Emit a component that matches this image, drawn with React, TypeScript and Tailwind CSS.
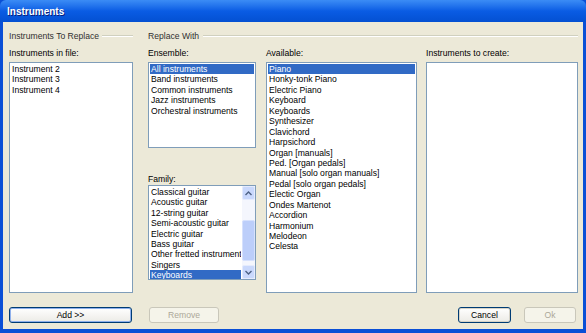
import React from "react";

const font = { fontFamily: '"Liberation Sans", Arial, sans-serif' };

const ensemble = [
  "All instruments",
  "Band instruments",
  "Common instruments",
  "Jazz instruments",
  "Orchestral instruments",
];

const family = [
  "Classical guitar",
  "Acoustic guitar",
  "12-string guitar",
  "Semi-acoustic guitar",
  "Electric guitar",
  "Bass guitar",
  "Other fretted instruments",
  "Singers",
  "Keyboards",
];

const available = [
  "Piano",
  "Honky-tonk Piano",
  "Electric Piano",
  "Keyboard",
  "Keyboards",
  "Synthesizer",
  "Clavichord",
  "Harpsichord",
  "Organ [manuals]",
  "Ped. [Organ pedals]",
  "Manual [solo organ manuals]",
  "Pedal [solo organ pedals]",
  "Electic Organ",
  "Ondes Martenot",
  "Accordion",
  "Harmonium",
  "Melodeon",
  "Celesta",
];

function ListItems({ items, selected }: { items: string[]; selected?: string }) {
  return (
    <div className="flex flex-col pt-[1px] px-[1px]">
      {items.map((it) => (
        <div
          key={it}
          className={
            "h-[10.45px] leading-[10.45px] pl-[1px] whitespace-nowrap overflow-hidden " +
            (it === selected ? "bg-[#316ac5] text-white" : "text-black")
          }
        >
          {it}
        </div>
      ))}
    </div>
  );
}

function ListBox({
  items,
  selected,
  className,
}: {
  items: string[];
  selected?: string;
  className: string;
}) {
  return (
    <div className={"bg-white border border-[#7f9db9] overflow-hidden " + className}>
      <ListItems items={items} selected={selected} />
    </div>
  );
}

function Chevron({ up }: { up?: boolean }) {
  return (
    <svg width="7" height="5" viewBox="0 0 7 5">
      <path
        d={up ? "M0.5 4 L3.5 1 L6.5 4" : "M0.5 1 L3.5 4 L6.5 1"}
        fill="none"
        stroke="#4d6185"
        strokeWidth="1.4"
      />
    </svg>
  );
}

function ScrollBar() {
  return (
    <div className="w-[13px] flex flex-col bg-[#f4f6fd]">
      <div className="h-[14px] flex items-center justify-center bg-[#c9d8fc] border border-[#e4ebfd] rounded-[2px]">
        <Chevron up />
      </div>
      <div className="h-[20px]" />
      <div className="h-[41px] bg-[#bccefa] border border-[#d6e1fd] rounded-[2px]" />
      <div className="flex-1" />
      <div className="h-[14px] flex items-center justify-center bg-[#c9d8fc] border border-[#e4ebfd] rounded-[2px]">
        <Chevron />
      </div>
    </div>
  );
}

function Etched() {
  return <div className="flex-1 h-[2px] border-t border-[#d0d0bf] border-b border-b-white" />;
}

function Button({
  label,
  className,
  variant,
}: {
  label: string;
  className: string;
  variant: "focus" | "normal" | "disabled";
}) {
  if (variant === "disabled") {
    return (
      <div
        className={
          "h-[16px] flex items-center justify-center rounded-[3px] border border-[#c9c7ba] bg-[#f5f4ea] text-[#aca899] " +
          className
        }
      >
        {label}
      </div>
    );
  }
  return (
    <div
      className={
        "h-[16px] flex items-center justify-center rounded-[3px] border border-[#003c74] bg-gradient-to-b from-white to-[#ecebe6] text-black " +
        (variant === "focus" ? "shadow-[inset_0_0_0_1px_#8fb0ec] " : "shadow-[inset_0_0_0_1px_#d6d3c8] ") +
        className
      }
    >
      {label}
    </div>
  );
}

export default function App() {
  return (
    <div
      className="w-[586px] h-[333px] flex flex-col bg-[#0a4fd6] text-[8.6px] overflow-hidden"
      style={font}
    >
      {/* title bar */}
      <div className="h-[22px] shrink-0 flex items-center pl-[7px] bg-gradient-to-b from-[#3b8cf5] via-[#0a5ce4] to-[#0450d2] rounded-t-[6px]">
        <span className="text-white font-bold text-[10px] [text-shadow:1px_1px_0_#0a1e7a]">
          Instruments
        </span>
      </div>

      {/* client */}
      <div className="flex-1 mx-[3px] mb-[4px] bg-[#ece9d8] pl-[6px] pr-[5px] pt-[9px] flex flex-col">
        <div className="h-[10px] flex items-center gap-[15px] text-[#303030]">
          <div className="w-[124px] flex items-center gap-[3px]">
            <span>Instruments To Replace</span>
            <Etched />
          </div>
          <div className="flex-1 flex items-center gap-[4px]">
            <span>Replace With</span>
            <Etched />
          </div>
        </div>

        <div className="mt-[7px] flex items-start">
          <div className="w-[124px] flex flex-col">
            <div className="h-[10px] leading-[10px] text-black">Instruments in file:</div>
            <ListBox
              items={["Instrument 2", "Instrument 3", "Instrument 4"]}
              className="mt-[4px] h-[231px]"
            />
          </div>

          <div className="ml-[15px] w-[108px] flex flex-col">
            <div className="h-[10px] leading-[10px] text-black">Ensemble:</div>
            <ListBox items={ensemble} selected="All instruments" className="mt-[4px] h-[86px]" />
            <div className="mt-[26px] h-[10px] leading-[10px] text-black">Family:</div>
            <div className="mt-[1px] h-[95px] bg-white border border-[#7f9db9] flex">
              <div className="flex-1 overflow-hidden">
                <div className="flex flex-col pt-[1px] px-[1px]">
                  {family.map((it) => (
                    <div
                      key={it}
                      className={
                        "h-[10.4px] leading-[10.4px] pl-[1px] whitespace-nowrap overflow-hidden " +
                        (it === "Keyboards" ? "bg-[#316ac5] text-white" : "text-black")
                      }
                    >
                      {it}
                    </div>
                  ))}
                </div>
              </div>
              <ScrollBar />
            </div>
          </div>

          <div className="ml-[10px] w-[151px] flex flex-col">
            <div className="h-[10px] leading-[10px] text-black">Available:</div>
            <ListBox items={available} selected="Piano" className="mt-[4px] h-[231px]" />
          </div>

          <div className="ml-[9px] w-[152px] flex flex-col">
            <div className="h-[10px] leading-[10px] text-black">Instruments to create:</div>
            <ListBox items={[]} className="mt-[4px] h-[231px]" />
          </div>
        </div>

        <div className="mt-[14px] flex items-center">
          <Button label="Add >>" variant="focus" className="w-[123px]" />
          <Button label="Remove" variant="disabled" className="ml-[17px] w-[70px]" />
          <div className="flex-1" />
          <Button label="Cancel" variant="normal" className="w-[53px]" />
          <Button label="Ok" variant="disabled" className="ml-[13px] mr-[2px] w-[52px]" />
        </div>
      </div>
    </div>
  );
}
